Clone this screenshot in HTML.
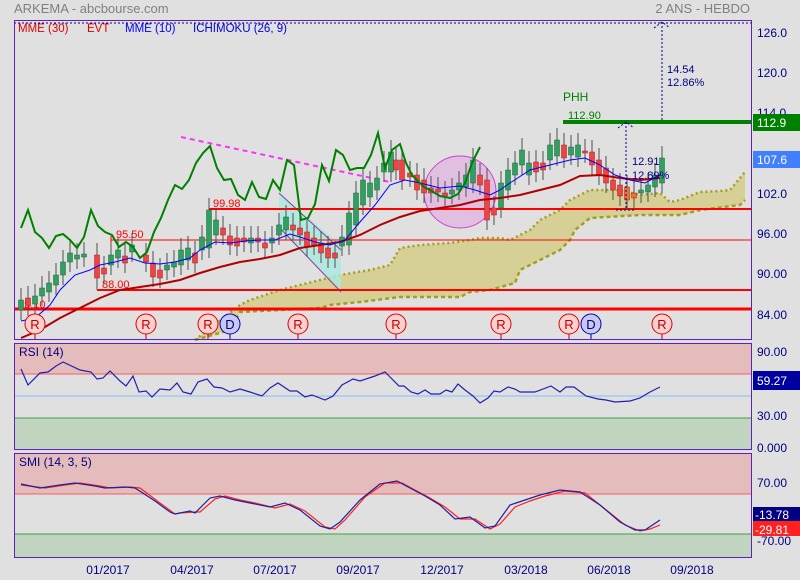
<!DOCTYPE html>
<html><head><meta charset="utf-8"><style>
body{margin:0;background:#e0e0e0;width:800px;height:580px;overflow:hidden;font-family:"Liberation Sans",sans-serif}
svg{display:block}
text{font-family:"Liberation Sans",sans-serif}
</style></head><body>
<svg id="s" width="800" height="580" viewBox="0 0 800 580" xmlns="http://www.w3.org/2000/svg">
<rect width="800" height="580" fill="#e0e0e0"/>
<text x="14" y="13" font-size="13" fill="#808080">ARKEMA - abcbourse.com</text>
<text x="750" y="13" font-size="13" fill="#808080" text-anchor="end">2 ANS - HEBDO</text>
<!-- main panel -->
<line x1="14" y1="23" x2="751" y2="23" stroke="#000080" stroke-dasharray="2,2"/>
<text x="18" y="32" font-size="11.5" fill="#e00000">MME (30)</text>
<text x="87" y="32" font-size="11.5" fill="#e00000">EVT</text>
<text x="125" y="32" font-size="11.5" fill="#0000ff">MME (10)</text>
<text x="193" y="32" font-size="11.5" fill="#0000e0">ICHIMOKU (26, 9)</text>
<!-- ichimoku cloud -->
<polygon fill="#d4cc88" fill-opacity="0.85" points="195,340 240,305 250,300 280,290 300,285 320,280 340,275 370,270 390,265 400,248 420,245 450,243 470,240 480,238 500,238 510,240 520,235 530,230 540,220 560,210 570,200 590,190 620,190 640,195 660,193 670,202 680,200 700,192 720,191 730,190 745,172 745,200 740,205 700,210 680,215 640,215 590,218 575,230 570,240 560,250 540,260 520,270 515,283 490,290 470,292 460,297 400,297 360,302 330,305 320,308 300,309 240,312 230,330"/>
<polyline fill="none" stroke="#a0a020" stroke-width="2.5" stroke-dasharray="2,3" points="195,340 240,305 250,300 280,290 300,285 320,280 340,275 370,270 390,265 400,248 420,245 450,243 470,240 480,238 500,238 510,240 520,235 530,230 540,220 560,210 570,200 590,190 620,190 640,195 660,193 670,202 680,200 700,192 720,191 730,190 745,172"/>
<polyline fill="none" stroke="#a0a020" stroke-width="2.5" stroke-dasharray="4,3" points="195,340 230,330 240,312 300,309 320,308 330,305 360,302 400,297 460,297 470,292 490,290 515,283 520,270 540,260 560,250 570,240 575,230 590,218 640,215 680,215 700,210 740,205 745,200"/>
<!-- cyan channel & purple circle -->
<polygon points="279,193 341,245 341,290 279,230" fill="#a8e8e0" fill-opacity="0.8"/>
<line x1="279" y1="193" x2="341" y2="250" stroke="#8040a0"/>
<line x1="277" y1="225" x2="341" y2="292" stroke="#8040a0"/>
<circle cx="460" cy="192" r="36" fill="#e0a8e0" fill-opacity="0.6" stroke="#d040d0"/>
<!-- horizontal lines -->
<line x1="14" y1="309" x2="751" y2="309" stroke="#ff0000" stroke-width="3"/>
<line x1="97" y1="290" x2="751" y2="290" stroke="#ff0000" stroke-width="2"/>
<line x1="111" y1="240" x2="751" y2="240" stroke="#ff0000" stroke-width="1"/>
<line x1="111" y1="236" x2="111" y2="244" stroke="#ff0000"/>
<line x1="97" y1="280" x2="97" y2="290" stroke="#606060"/>
<line x1="209" y1="209" x2="751" y2="209" stroke="#ff0000" stroke-width="2"/>
<line x1="563" y1="122" x2="751" y2="122" stroke="#008000" stroke-width="4"/>
<text x="18" y="308" font-size="11" fill="#ff0000">85.10</text>
<text x="102" y="288" font-size="11" fill="#ff0000">88.00</text>
<text x="116" y="238" font-size="11" fill="#ff0000">95.50</text>
<text x="213" y="207" font-size="11" fill="#ff0000">99.98</text>
<text x="568" y="119" font-size="11" fill="#008000">112.90</text>
<text x="563" y="101" font-size="12" fill="#008000">PHH</text>
<line x1="181" y1="137" x2="390" y2="182" stroke="#ff30ff" stroke-width="2" stroke-dasharray="5,4"/>
<g id="candles"></g>
<!-- MAs -->
<polyline fill="none" stroke="#b00000" stroke-width="2" points="21,338 40,330 60,318 80,308 100,298 120,290 140,287 160,284 180,280 200,273 220,267 240,262 260,259 280,255 300,248 320,245 340,242 360,235 380,225 400,217 420,211 440,208 460,205 480,200 500,198 520,195 540,190 560,185 580,176 600,175 620,178 640,180 660,178"/>
<polyline fill="none" stroke="#0000ff" stroke-width="1" points="21,321 35,318 50,305 60,290 75,275 90,270 100,265 115,262 130,258 145,263 160,264 175,262 190,258 200,250 215,242 230,243 245,241 260,240 275,240 290,234 300,237 315,242 330,245 345,240 360,222 375,205 390,185 405,180 420,183 440,188 460,186 475,190 490,195 500,190 510,183 530,170 550,165 570,160 585,158 600,165 615,175 630,180 645,183 660,175"/>
<polyline fill="none" stroke="#008000" stroke-width="2" points="21,228 28,210 35,232 42,238 49,248 56,236 63,234 70,240 77,248 84,237 91,210 98,226 105,232 112,235 119,247 126,242 133,247 140,258 147,252 154,232 161,218 168,200 175,185 182,189 189,180 196,163 203,153 210,146 217,168 224,180 231,179 238,195 245,200 252,182 259,197 266,199 273,180 280,190 287,160 294,165 301,220 308,218 315,204 322,165 329,181 336,150 343,155 350,170 357,168 364,168 371,155 378,133 385,168 392,150 400,144 406,163 412,175 424,187 430,190 440,196 450,198 458,194 465,183 472,163 480,147"/>
<!-- measurement -->
<line x1="626" y1="122" x2="626" y2="210" stroke="#000080" stroke-dasharray="2,2"/>
<line x1="662" y1="22" x2="662" y2="122" stroke="#000080" stroke-dasharray="2,2"/>
<path d="M618,128 L626,122 L634,128 M654,28 L662,22 L670,28" fill="none" stroke="#000080" stroke-dasharray="2,2"/>
<line x1="616" y1="210" x2="634" y2="210" stroke="#000080" stroke-dasharray="2,2"/>
<text x="667" y="73" font-size="11" fill="#000080">14.54</text>
<text x="667" y="86" font-size="11" fill="#000080">12.86%</text>
<text x="632" y="165" font-size="11" fill="#000080">12.91</text>
<text x="632" y="179" font-size="11" fill="#000080">12.89%</text>
<g id="marks"></g>
<rect x="14.5" y="20.5" width="737" height="319" fill="none" stroke="#6020c0"/>
<!-- right axis -->
<g font-size="12" fill="#000080">
<text x="757" y="37">126.0</text><text x="757" y="77">120.0</text><text x="757" y="117">114.0</text>
<text x="757" y="198">102.0</text><text x="757" y="238">96.00</text><text x="757" y="278">90.00</text><text x="757" y="319">84.00</text>
</g>
<rect x="753" y="114" width="47" height="17" fill="#008000"/><text x="757" y="127" font-size="12" fill="#fff">112.9</text>
<rect x="753" y="151" width="47" height="17" fill="#4080ff"/><text x="757" y="164" font-size="12" fill="#fff">107.6</text>
<!-- RSI -->
<rect x="14" y="343" width="737" height="31" fill="#e4bcbc"/>
<rect x="14" y="374" width="737" height="44" fill="#e0e0e0"/>
<rect x="14" y="418" width="737" height="31" fill="#c0d4c0"/>
<line x1="14" y1="374" x2="751" y2="374" stroke="#f06060"/>
<line x1="14" y1="396" x2="751" y2="396" stroke="#80c0ff"/>
<line x1="14" y1="418" x2="751" y2="418" stroke="#40a040"/>
<polyline fill="none" stroke="#2020b0" stroke-width="1.2" points="21,369 28,385 40,373 48,372 56,366 63,362 80,370 91,372 97,379 103,378 110,371 120,381 126,386 133,376 139,392 146,391 152,397 160,389 170,390 177,383 183,392 191,394 198,382 207,379 214,387 222,388 230,392 240,389 250,392 262,396 270,388 278,383 290,391 297,391 305,397 312,395 325,400 333,396 342,385 353,379 360,381 375,376 385,372 391,378 399,386 404,386 411,392 418,394 425,390 431,394 440,394 446,390 452,392 458,384 465,390 473,396 480,403 488,398 494,391 500,392 508,387 515,389 520,392 535,392 551,386 560,392 566,387 574,387 586,396 598,399 606,400 615,402 630,401 640,398 650,392 660,387"/>
<text x="19" y="356" font-size="12" fill="#000080">RSI (14)</text>
<rect x="14.5" y="343.5" width="737" height="106" fill="none" stroke="#6020c0"/>
<g font-size="12" fill="#000080"><text x="757" y="356">90.00</text><text x="757" y="420">30.00</text><text x="757" y="452">0.000</text></g>
<rect x="753" y="371" width="47" height="19" fill="#0000a0"/><text x="757" y="385" font-size="12" fill="#fff">59.27</text>
<!-- SMI -->
<rect x="14" y="453" width="737" height="41" fill="#e4bcbc"/>
<rect x="14" y="494" width="737" height="40" fill="#e0e0e0"/>
<rect x="14" y="534" width="737" height="24" fill="#c0d4c0"/>
<line x1="14" y1="494" x2="751" y2="494" stroke="#f06060"/>
<line x1="14" y1="534" x2="751" y2="534" stroke="#40a040"/>
<polyline fill="none" stroke="#ff2020" stroke-width="1.2" points="21,485 45,488 65,485 80,483 100,486 110,488 130,487 140,488 160,503 175,514 180,513 195,512 200,512 215,499 225,496 240,500 255,503 275,508 290,504 305,511 325,527 335,529 345,520 365,497 385,483 402,483 415,490 430,498 445,507 460,519 475,519 490,529 500,524 515,507 530,501 545,496 565,491 585,493 605,509 625,525 640,531 650,529 660,525"/>
<polyline fill="none" stroke="#2020a0" stroke-width="1.2" points="21,484 40,488 60,485 75,483 95,486 105,488 125,487 135,488 155,501 170,512 175,514 190,511 195,513 210,498 220,496 235,500 250,503 270,507 285,503 300,510 320,526 330,529 340,522 360,500 380,484 397,481 410,488 425,496 440,505 455,519 470,517 485,528 495,526 510,505 525,500 540,495 560,490 580,492 600,505 620,522 635,530 645,530 660,520"/>
<text x="19" y="466" font-size="12" fill="#000080">SMI (14, 3, 5)</text>
<rect x="14.5" y="453.5" width="737" height="104" fill="none" stroke="#6020c0"/>
<g font-size="12" fill="#000080"><text x="757" y="487">70.00</text><text x="757" y="545">-70.00</text></g>
<rect x="753" y="507" width="47" height="14" fill="#000080"/><text x="755" y="519" font-size="12" fill="#fff">-13.78</text>
<rect x="753" y="521" width="47" height="15" fill="#ff2020"/><text x="755" y="534" font-size="12" fill="#fff">-29.81</text>
<g font-size="12" fill="#000080" text-anchor="middle">
<text x="108" y="574">01/2017</text><text x="192" y="574">04/2017</text><text x="275" y="574">07/2017</text><text x="358" y="574">09/2017</text><text x="442" y="574">12/2017</text><text x="526" y="574">03/2018</text><text x="609" y="574">06/2018</text><text x="692" y="574">09/2018</text>
</g>
</svg>
<script>
var c=[[21,300,310,'g'],[28,298,306,'r'],[35,296,304,'g'],[42,288,296,'g'],[49,283,292,'g'],[56,275,285,'g'],[63,262,275,'g'],[70,253,262,'g'],[77,255,259,'g'],[84,254,257,'g'],[97,255,278,'r'],[104,268,274,'r'],[111,255,265,'g'],[118,250,258,'g'],[125,256,263,'r'],[132,245,252,'g'],[146,255,262,'r'],[153,263,277,'r'],[160,270,278,'r'],[167,265,270,'g'],[174,262,267,'g'],[181,250,265,'g'],[188,248,260,'g'],[195,253,263,'r'],[202,237,250,'g'],[209,210,248,'g'],[216,220,235,'g'],[223,228,235,'r'],[230,236,245,'r'],[237,238,246,'r'],[244,238,242,'r'],[251,238,243,'g'],[258,238,242,'r'],[265,243,248,'r'],[272,238,243,'g'],[279,225,235,'g'],[286,217,230,'g'],[293,225,230,'r'],[300,228,235,'r'],[307,232,247,'r'],[314,238,245,'r'],[321,243,253,'r'],[328,248,258,'r'],[335,253,258,'r'],[342,237,246,'g'],[349,213,245,'g'],[356,193,225,'g'],[363,180,205,'g'],[370,183,197,'g'],[377,178,190,'g'],[384,163,172,'g'],[391,152,172,'g'],[396,160,170,'r'],[402,160,180,'r'],[410,173,177,'r'],[417,175,190,'r'],[424,180,193,'r'],[431,188,193,'r'],[438,189,192,'r'],[445,193,196,'r'],[452,190,194,'g'],[459,183,190,'g'],[466,175,187,'g'],[473,160,183,'g'],[480,175,185,'r'],[487,180,220,'r'],[494,208,215,'r'],[501,183,208,'g'],[508,170,190,'g'],[515,163,175,'g'],[522,150,165,'g'],[529,163,175,'g'],[536,162,172,'r'],[543,163,170,'r'],[550,145,160,'g'],[557,140,156,'g'],[564,145,158,'r'],[571,147,155,'g'],[578,145,157,'g'],[585,151,153,'r'],[592,152,165,'r'],[599,160,175,'r'],[606,168,183,'r'],[613,180,190,'r'],[620,185,196,'r'],[627,187,200,'o'],[634,193,198,'o'],[641,190,193,'g'],[648,185,192,'g'],[655,175,187,'g'],[662,158,183,'g']];
var ns='http://www.w3.org/2000/svg',g=document.getElementById('candles'),h='';
c.forEach(function(d){var col=d[3]=='g'?'#30a060':d[3]=='r'?'#ee4444':'#f07030';var st=d[3]=='g'?'#206040':'#a02020';
h+='<line x1="'+d[0]+'" y1="'+(d[1]-12)+'" x2="'+d[0]+'" y2="'+(d[2]+10)+'" stroke="#505050"/>';
h+='<rect x="'+(d[0]-2.5)+'" y="'+d[1]+'" width="5" height="'+Math.max(2,d[2]-d[1])+'" fill="'+col+'" stroke="'+st+'" stroke-width="0.5"/>';});
g.innerHTML=h;
var m='',R=[35,146,208,298,396,501,569,662],D=[230,591];
R.forEach(function(x){m+='<line x1="'+x+'" y1="334" x2="'+x+'" y2="339" stroke="#c00000"/><circle cx="'+x+'" cy="324" r="10" fill="#ffd0d0" stroke="#e00000"/><text x="'+x+'" y="329" font-size="13" fill="#c00000" text-anchor="middle">R</text>';});
D.forEach(function(x){m+='<line x1="'+x+'" y1="334" x2="'+x+'" y2="339" stroke="#0000a0"/><circle cx="'+x+'" cy="324" r="10" fill="#c8c8f0" stroke="#0000c0"/><text x="'+x+'" y="329" font-size="13" fill="#000080" text-anchor="middle">D</text>';});
document.getElementById('marks').innerHTML=m;
</script>
</body></html>
